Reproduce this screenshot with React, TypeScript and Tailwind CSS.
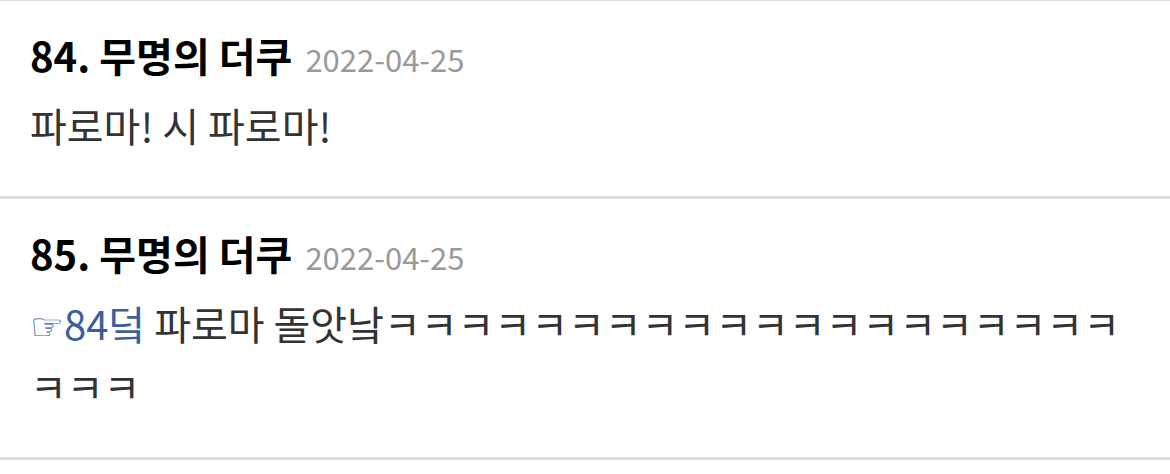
import React from "react";

const KO = { fontFamily: '"Noto Sans CJK KR", "Noto Sans", sans-serif' };

function Item({
  num,
  date,
  children,
}: {
  num: number;
  date: string;
  children: React.ReactNode;
}) {
  return (
    <div className="pl-[30px] pr-[30px] pt-[26px] pb-[39px] border-b-[3px] border-[#dddddd]">
      <div className="flex h-[57px] items-baseline overflow-hidden leading-[57px]">
        <span className="text-[40px] font-bold text-black">
          {num}. 무명의 더쿠
        </span>
        <span className="ml-[13px] text-[31px] text-[#999999]">{date}</span>
      </div>
      <div className="mt-[10px] text-[40px] leading-[63px] text-[#333333]">
        {children}
      </div>
    </div>
  );
}

export default function App() {
  return (
    <div className="w-[1170px] h-[474px] bg-white overflow-hidden" style={KO}>
      <div className="h-[1px] bg-[#dddddd]" />
      <Item num={84} date="2022-04-25">
        파로마! 시 파로마!
      </Item>
      <Item num={85} date="2022-04-25">
        <span className="text-[#3a5f9a]">
          <span
            className="text-[38px] leading-none font-light"
            style={{ fontFamily: '"DejaVu Sans", sans-serif' }}
          >
            ☞
          </span>
          84덬
        </span>{" "}
        파로마 돌앗낰ㅋㅋㅋㅋㅋㅋㅋㅋㅋㅋㅋㅋㅋㅋㅋㅋㅋㅋㅋㅋㅋㅋㅋ
      </Item>
    </div>
  );
}
